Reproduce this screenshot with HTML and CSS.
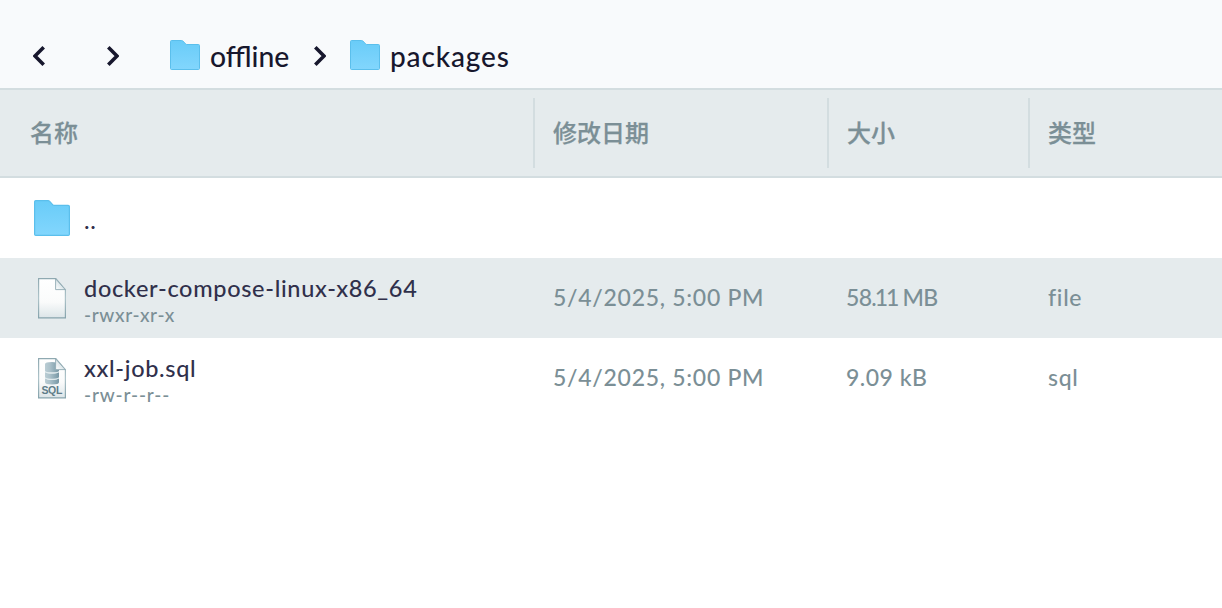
FILE: index.html
```html
<!DOCTYPE html>
<html lang="zh-CN">
<head>
<meta charset="utf-8">
<title>packages</title>
<link rel="stylesheet" href="styles.css">
</head>
<body>
<svg class="defs" width="0" height="0" aria-hidden="true">
  <defs>
    <linearGradient id="blue" x1="0" y1="0" x2="0" y2="1"><stop offset="0" stop-color="#69ccf8"/><stop offset="1" stop-color="#82d6fd"/></linearGradient>
    <linearGradient id="paper" x1="0" y1="0" x2="0" y2="1"><stop offset="0" stop-color="#fff"/><stop offset=".6" stop-color="#fafbfb"/><stop offset="1" stop-color="#dce5e8"/></linearGradient>
    <linearGradient id="edge" x1="0" y1="0" x2="0" y2="1"><stop offset="0" stop-color="#8fa9b1"/><stop offset=".5" stop-color="#adc3c9"/><stop offset="1" stop-color="#86a3ac"/></linearGradient>
    <linearGradient id="fold" x1="0" y1="1" x2="1" y2="0"><stop offset="0" stop-color="#fff"/><stop offset=".5" stop-color="#dce6e9"/><stop offset="1" stop-color="#9db4bb"/></linearGradient>
    <linearGradient id="disk" x1="0" y1="0" x2="1" y2="0"><stop offset="0" stop-color="#bacdd4"/><stop offset=".35" stop-color="#abc1ca"/><stop offset="1" stop-color="#7797a5"/></linearGradient>
    <symbol id="folder" viewBox="0 0 30 30"><path d="M.5 1.5q0-1 1-1h10.2q.7 0 1.2.5l2.6 2.8q.5.7 1.3.7h11.7q1 0 1 1v23q0 1-1 1h-27q-1 0-1-1z" fill="url(#blue)" stroke="#5bbfec"/></symbol>
    <symbol id="page" viewBox="0 0 28 41"><path d="M.6.6h17.2l9.6 11.2v28H.6z" fill="url(#paper)" stroke="url(#edge)" stroke-width="1.2"/><path d="M17.6.8v10.8h9.6z" fill="url(#fold)" stroke="#91aab2" stroke-width=".9"/></symbol>
  </defs>
</svg>
<header class="toolbar">
  <svg class="arrow back" viewBox="0 0 12 20"><path d="M10.7 1.3 2 10l8.7 8.7"/></svg>
  <svg class="arrow forward" viewBox="0 0 12 20"><path d="M1.3 1.3 10 10l-8.7 8.7"/></svg>
  <svg class="crumb-icon"><use href="#folder"/></svg>
  <span class="crumb offline">offline</span>
  <svg class="arrow divider" viewBox="0 0 12 20"><path d="M1.3 1.3 10 10l-8.7 8.7"/></svg>
  <svg class="crumb-icon"><use href="#folder"/></svg>
  <span class="crumb packages">packages</span>
</header>
<main>
  <div class="row head">
    <div class="cell">名称</div><div class="cell">修改日期</div><div class="cell">大小</div><div class="cell">类型</div>
  </div>
  <div class="row">
    <div class="entry"><svg class="folder"><use href="#folder"/></svg><span class="name up">..</span></div>
  </div>
  <div class="row selected">
    <div class="entry"><svg class="file" viewBox="0 0 28 41"><use href="#page"/></svg><div class="label"><div class="name docker">docker-compose-linux-x86_64</div><div class="mode exec">-rwxr-xr-x</div></div></div>
    <div class="meta date">5/4/2025, 5:00 PM</div><div class="meta size compact">58<span class="tight">.11</span> MB</div><div class="meta kind">file</div>
  </div>
  <div class="row">
    <div class="entry"><svg class="file" viewBox="0 0 28 41"><use href="#page"/>
      <g fill="url(#disk)"><path d="M7 6q0-2 7-2 3 0 3.5.5V11q0 1 3.5 1v1q0 1.5-7 1.5T7 13z"/><path d="M7 14q2 1.6 7 1.6t7-1.6v5q0 2-7 2t-7-2z"/><path d="M7 20.2q2 1.6 7 1.6t7-1.6v4q0 2.2-7 2.2t-7-2.2z"/></g>
      <path d="M7 13.8q2 1.2 7 1.2t7-1.2M7 20q2 1.2 7 1.2t7-1.2" fill="none" stroke="#dce8ec" stroke-width=".8"/>
      <text class="sql" x="3.4" y="36" textLength="21">SQL</text></svg><div class="label"><div class="name job">xxl-job.sql</div><div class="mode plain">-rw-r--r--</div></div></div>
    <div class="meta date">5/4/2025, 5:00 PM</div><div class="meta size">9.09 kB</div><div class="meta kind">sql</div>
  </div>
</main>
</body>
</html>
```
FILE: styles.css
```css
* { box-sizing: border-box; }
body { margin: 0; background: #fff; color: #30304b; font-family: Lato, "Noto Sans CJK SC", sans-serif; font-weight: 500; }
svg { display: block; flex: none; }
.defs { height: 0; }
.toolbar { display: flex; align-items: center; height: 90px; padding: 24px 0 0 33px; background: #f8fafc; border-bottom: 2px solid #d3dde0; color: #17172d; }
.arrow { width: 12px; height: 20px; fill: none; stroke: #17172d; stroke-width: 3.6; }
.back { margin-right: 62px; }
.forward { margin-right: 51px; }
.divider { margin-right: 24px; }
.crumb-icon { width: 30px; height: 30px; margin: 0 10px 2px 0; }
.crumb { font-size: 28px; line-height: 34px; white-space: nowrap; }
.offline { width: 104px; font-size: 28.3px; }
.packages { letter-spacing: .85px; }
.row { display: grid; grid-template-columns: 533px 294px 201px 194px; height: 80px; align-items: center; color: #7b8f96; }
.selected { background: #e5ebed; }
.head { height: 88px; background: #e5ebed; border-bottom: 2px solid #d3dde0; }
.cell { height: 70px; padding-left: 18px; border-left: 2px solid #d3dde0; font: 500 24px/67px "Noto Sans CJK SC", sans-serif; -webkit-text-stroke: .25px #7b8f96; }
.cell:first-child { padding-left: 30px; border: 0; }
.entry { display: flex; align-items: center; height: 80px; padding-left: 34px; }
.folder { width: 36px; height: 36px; margin-right: 14px; }
.file { width: 28px; height: 41px; margin: 0 18px 0 4px; }
.label { padding-top: 6px; }
.name { font-size: 23.5px; line-height: 28px; letter-spacing: .68px; color: #30304b; white-space: nowrap; }
.up { padding-top: 3px; }
.mode { font-size: 19px; line-height: 26px; letter-spacing: .65px; white-space: nowrap; }
.plain { letter-spacing: .85px; }
.meta { padding: 0 0 2px 20px; font-size: 23px; line-height: 30px; letter-spacing: .72px; white-space: nowrap; }
.size { padding-left: 19px; letter-spacing: .5px; }
.compact { letter-spacing: -.7px; }
.tight { letter-spacing: -2px; }
.sql { fill: #5e7d89; font: 700 10.5px "Liberation Sans", sans-serif; }
```
